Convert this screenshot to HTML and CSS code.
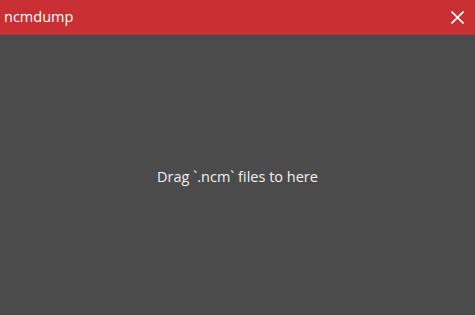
FILE: index.html
```html
<!DOCTYPE html>
<html>
<head>
<meta charset="utf-8">
<link rel="stylesheet" href="styles.css">
</head>
<body>
<div class="window">
  <header class="titlebar">
    <span class="title">ncmdump</span>
    <button class="close" aria-label="Close">
      <svg width="13" height="13" viewBox="0 0 13 13"><path d="M0.5 0.5 L12.5 12.5 M12.5 0.5 L0.5 12.5" stroke="#ffffff" stroke-width="1.6" fill="none"/></svg>
    </button>
  </header>
  <main class="drop">
    <p class="hint">Drag `.ncm` files to here</p>
  </main>
</div>
</body>
</html>
```
FILE: styles.css
```css
html, body {
  margin: 0;
  padding: 0;
  height: 100%;
}
body {
  font-family: "Open Sans", "Noto Sans", sans-serif;
  background: #4b4b4b;
}
.window {
  display: flex;
  flex-direction: column;
  height: 315px;
  width: 475px;
}
.titlebar {
  height: 35px;
  flex: 0 0 35px;
  background: #c83034;
  display: flex;
  align-items: center;
  justify-content: space-between;
  padding: 0 11px 0 4px;
  box-sizing: border-box;
}
.title {
  color: #ffffff;
  font-size: 14.5px;
  line-height: 1;
}
.close {
  background: none;
  border: 0;
  padding: 0;
  width: 13px;
  height: 13px;
  display: flex;
}
.drop {
  flex: 1;
  display: flex;
  align-items: center;
  justify-content: center;
  background: #4b4b4b;
}
.hint {
  margin: 0 0 -2px 0;
  color: #f2f2f2;
  font-size: 14.5px;
}
```
